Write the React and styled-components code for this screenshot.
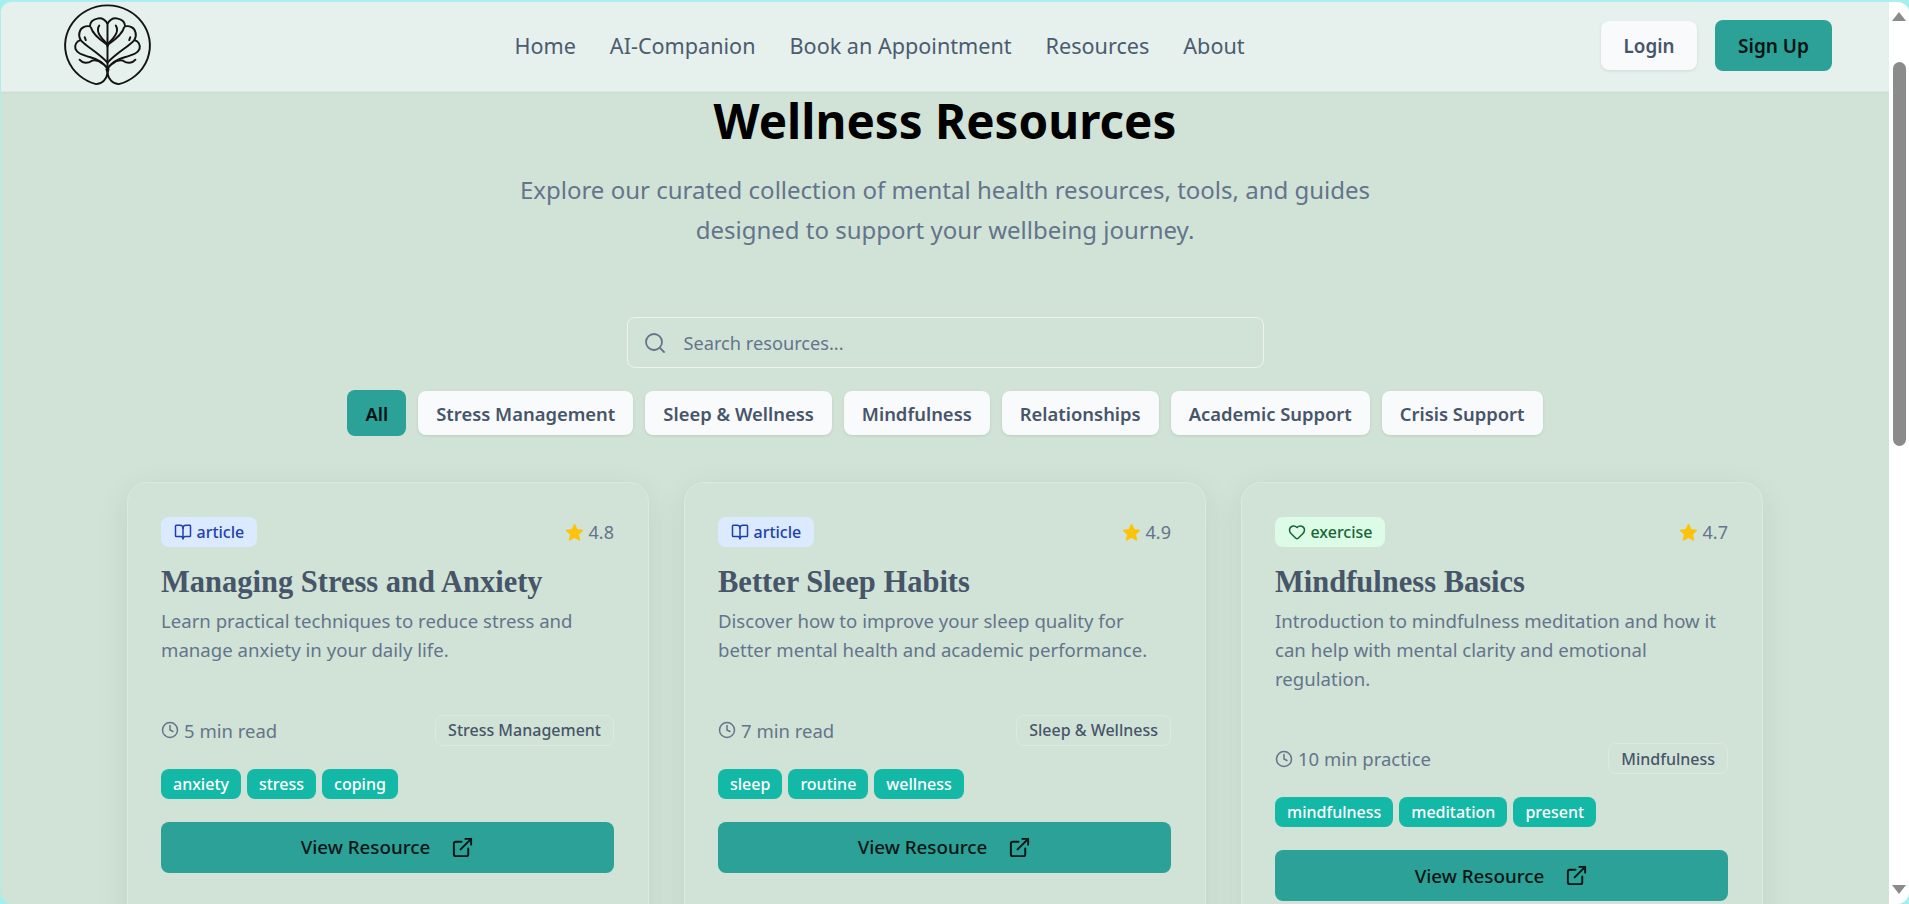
import React from "react";
import styled, { createGlobalStyle } from "styled-components";
import { Search, BookOpen, Heart, Clock, ExternalLink } from "lucide-react";

const Global = createGlobalStyle`
  html, body { margin: 0; padding: 0; height: 100%; overflow: hidden; background: #9ff0ee; }
  * { box-sizing: border-box; }
  body { font-family: "Noto Sans", "Open Sans", sans-serif; }
`;

const Frame = styled.div`
  width: 1909px;
  height: 904px;
  display: flex;
  overflow: hidden;
  background: #d1e3d7;
  border-radius: 12px;
  border-style: solid;
  border-color: #a9f0ee;
  border-width: 2px 0 0 1px;
`;
const Page = styled.div`
  flex: 1;
  min-width: 0;
  height: 100%;
  overflow: hidden;
  display: flex;
  flex-direction: column;
`;
const Nav = styled.header`
  flex: none;
  height: 90px;
  display: flex;
  align-items: center;
  padding: 0 57px 2px 61px;
  background: #e6f0ec;
  border-bottom: 1px solid #dde9e3;
  box-shadow: 0 1px 2px rgba(0, 0, 0, 0.03);
`;
const NavLinks = styled.nav`
  flex: 1;
  display: flex;
  justify-content: center;
  gap: 34px;
  padding-left: 5px;
`;
const NavLink = styled.a`
  font-size: 21.6px;
  color: #4b5c70;
`;
const Actions = styled.div`
  display: flex;
  align-items: center;
  gap: 18px;
`;
const LoginButton = styled.button`
  width: 96px;
  height: 49px;
  border: 0;
  border-radius: 8px;
  background: #f8fafc;
  color: #475569;
  font: 600 18.8px "Noto Sans", sans-serif;
  box-shadow: 0 1px 3px rgba(0, 0, 0, 0.1);
`;
const SignUpButton = styled.button`
  width: 117px;
  height: 51px;
  border: 0;
  border-radius: 8px;
  background: #2ba197;
  color: #071414;
  font: 600 19px "Noto Sans", sans-serif;
`;
const Main = styled.main`
  flex: 1;
  min-height: 0;
  padding: 0 125px;
`;
const Title = styled.h1`
  margin: 0;
  text-align: center;
  font-size: 47.6px;
  line-height: 58px;
  font-weight: 700;
  color: #000;
`;
const Subtitle = styled.p`
  margin: 20px auto 0;
  width: 896px;
  text-align: center;
  font-size: 24px;
  line-height: 40px;
  color: #64748b;
`;
const SearchBox = styled.div`
  margin: 67px auto 0;
  width: 637px;
  height: 51px;
  display: flex;
  align-items: center;
  gap: 17px;
  padding: 0 15px;
  border: 1px solid #eef5f1;
  border-radius: 8px;
  color: #64748b;
  font-size: 18.2px;
`;
const Filters = styled.div`
  margin-top: 22px;
  display: flex;
  justify-content: center;
  align-items: center;
  gap: 12px;
`;
const Filter = styled.button`
  height: ${(p) => (p.$active ? "46px" : "44px")};
  padding: 0 18px;
  border: 0;
  border-radius: 8px;
  background: ${(p) => (p.$active ? "#2ba197" : "#f8fafc")};
  color: ${(p) => (p.$active ? "#071414" : "#475569")};
  font: 600 18.4px "Noto Sans", sans-serif;
  box-shadow: ${(p) => (p.$active ? "none" : "0 1px 3px rgba(0,0,0,0.1)")};
`;
const Grid = styled.section`
  margin-top: 46px;
  display: grid;
  grid-template-columns: repeat(3, 522px);
  gap: 35px;
  justify-content: start;
  margin-left: 1px;
`;
const Card = styled.article`
  height: 520px;
  padding: 34px 34px 34px 33px;
  border: 1px solid #dbe9e1;
  border-radius: 20px;
  background: #d1e3d7;
  box-shadow: 0 8px 32px rgba(0, 0, 0, 0.08);
`;
const CardTop = styled.div`
  display: flex;
  justify-content: space-between;
  align-items: center;
`;
const TypeBadge = styled.span`
  height: 30px;
  display: inline-flex;
  align-items: center;
  gap: 5px;
  padding: 0 12.5px;
  border-radius: 8px;
  font-size: 16px;
  font-weight: 500;
  background: ${(p) => p.$bg};
  color: ${(p) => p.$fg};
`;
const Rating = styled.span`
  display: inline-flex;
  align-items: center;
  gap: 4px;
  font-size: 18px;
  color: #64748b;
`;
const CardTitle = styled.h3`
  margin: 16px 0 0;
  font-family: "Liberation Serif", serif;
  font-size: 30.5px;
  line-height: 38px;
  font-weight: 700;
  color: #475569;
`;
const Description = styled.p`
  margin: 6px 0 0;
  font-size: 18.6px;
  line-height: 28.8px;
  color: #64748b;
`;
const Meta = styled.div`
  margin-top: 50px;
  display: flex;
  justify-content: space-between;
  align-items: center;
`;
const Duration = styled.span`
  display: inline-flex;
  align-items: center;
  gap: 5px;
  font-size: 18.5px;
  color: #64748b;
`;
const Category = styled.span`
  height: 31px;
  display: inline-flex;
  align-items: center;
  padding: 0 12px;
  border: 1px solid #dbe9e1;
  border-radius: 8px;
  font-size: 16px;
  font-weight: 500;
  color: #475569;
`;
const Tags = styled.div`
  margin-top: 23px;
  display: flex;
  gap: 6px;
`;
const Tag = styled.span`
  height: 30px;
  display: inline-flex;
  align-items: center;
  padding: 0 12px;
  border-radius: 8px;
  background: #14b8a6;
  color: #fff;
  font-size: 16px;
  font-weight: 500;
`;
const ViewButton = styled.button`
  margin-top: 23px;
  width: 100%;
  height: 51px;
  display: flex;
  align-items: center;
  justify-content: center;
  gap: 21px;
  border: 0;
  border-radius: 8px;
  background: #2ba197;
  color: #071414;
  font: 500 18.8px "Noto Sans", sans-serif;
`;
const Scrollbar = styled.div`
  flex: none;
  width: 20px;
  height: 100%;
  background: #fff;
  display: flex;
  flex-direction: column;
  align-items: center;
  justify-content: space-between;
  padding: 10px 0;
  position: relative;
`;
const Thumb = styled.div`
  position: absolute;
  top: 60px;
  left: 4px;
  width: 13px;
  height: 384px;
  border-radius: 7px;
  background: #8b8b8b;
`;
const ArrowUp = styled.div`
  width: 0;
  height: 0;
  border-left: 7px solid transparent;
  border-right: 7px solid transparent;
  border-bottom: 9px solid #8b8b8b;
`;
const ArrowDown = styled(ArrowUp)`
  transform: rotate(180deg);
`;

const Logo = () => {
  const half = (
    <g fill="none" stroke="#141414" strokeWidth="1.9" strokeLinecap="round" strokeLinejoin="round">
      <path d="M44 21 C41 16 37 15 34 16 C30 17 27 20 27 24 C23 23 18 25 17 30 C16 33 17 36 18 38 C14 39 12 43 13 47 C15 52 20 53 26 55 C33 57 40 61 44 67" />
      <path d="M44 43 C38 38 30 33 28 25" />
      <path d="M36 23 C33 28 35 33 44 42" />
      <path d="M18 38 C24 45 34 50 44 61" />
      <path d="M22 35 L23 38" />
      <path d="M17 58 C20 62 25 62 29 59 C32 58 36 59 39 62" />
    </g>
  );
  return (
    <svg width="91" height="86" viewBox="0 0 88 88" preserveAspectRatio="none">
      <path d="M44 72 C43 78 39 83 33 83 A41 41 0 1 1 55 83 C49 83 45 78 44 72 Z" fill="none" stroke="#141414" strokeWidth="1.9" />
      <path d="M44 20 L44 74" stroke="#141414" strokeWidth="1.9" />
      <path d="M44 38 L42.5 43 L44 47 L45.5 43 Z M44 62 L42 68 L44 74 L46 68 Z" fill="#141414" />
      {half}
      <g transform="translate(88 0) scale(-1 1)">{half}</g>
    </svg>
  );
};

const Star = () => (
  <svg width="21" height="21" viewBox="0 0 24 24">
    <path
      d="M12 3l2.7 5.9 6.3.8-4.6 4.4 1.2 6.4L12 17.4l-5.6 3.1 1.2-6.4L3 9.7l6.3-.8z"
      fill="#fcc30b"
      stroke="#fcc30b"
      strokeWidth="1.6"
      strokeLinejoin="round"
    />
  </svg>
);

const cards = [
  { Icon: BookOpen, type: "article", bg: "#dbeafe", fg: "#1e40af", rating: "4.8", title: "Managing Stress and Anxiety", desc: "Learn practical techniques to reduce stress and manage anxiety in your daily life.", time: "5 min read", cat: "Stress Management", tags: ["anxiety", "stress", "coping"] },
  { Icon: BookOpen, type: "article", bg: "#dbeafe", fg: "#1e40af", rating: "4.9", title: "Better Sleep Habits", desc: "Discover how to improve your sleep quality for better mental health and academic performance.", time: "7 min read", cat: "Sleep & Wellness", tags: ["sleep", "routine", "wellness"] },
  { Icon: Heart, type: "exercise", bg: "#dcfce7", fg: "#166534", rating: "4.7", title: "Mindfulness Basics", desc: "Introduction to mindfulness meditation and how it can help with mental clarity and emotional regulation.", time: "10 min practice", cat: "Mindfulness", tags: ["mindfulness", "meditation", "present"] },
];

const filters = ["All", "Stress Management", "Sleep & Wellness", "Mindfulness", "Relationships", "Academic Support", "Crisis Support"];
const links = ["Home", "AI-Companion", "Book an Appointment", "Resources", "About"];

export default function App() {
  return (
    <Frame>
      <Global />
      <Page>
        <Nav>
          <Logo />
          <NavLinks>{links.map((l) => <NavLink key={l}>{l}</NavLink>)}</NavLinks>
          <Actions>
            <LoginButton>Login</LoginButton>
            <SignUpButton>Sign Up</SignUpButton>
          </Actions>
        </Nav>
        <Main>
          <Title>Wellness Resources</Title>
          <Subtitle>Explore our curated collection of mental health resources, tools, and guides designed to support your wellbeing journey.</Subtitle>
          <SearchBox>
            <Search size={24} strokeWidth={1.8} />
            <span>Search resources...</span>
          </SearchBox>
          <Filters>
            {filters.map((f, i) => <Filter key={f} $active={i === 0}>{f}</Filter>)}
          </Filters>
          <Grid>
            {cards.map((c) => (
              <Card key={c.title}>
                <CardTop>
                  <TypeBadge $bg={c.bg} $fg={c.fg}><c.Icon size={18} strokeWidth={2} />{c.type}</TypeBadge>
                  <Rating><Star />{c.rating}</Rating>
                </CardTop>
                <CardTitle>{c.title}</CardTitle>
                <Description>{c.desc}</Description>
                <Meta>
                  <Duration><Clock size={18} strokeWidth={2} />{c.time}</Duration>
                  <Category>{c.cat}</Category>
                </Meta>
                <Tags>{c.tags.map((t) => <Tag key={t}>{t}</Tag>)}</Tags>
                <ViewButton>View Resource<ExternalLink size={23} strokeWidth={2} /></ViewButton>
              </Card>
            ))}
          </Grid>
        </Main>
      </Page>
      <Scrollbar>
        <ArrowUp />
        <Thumb />
        <ArrowDown />
      </Scrollbar>
    </Frame>
  );
}
